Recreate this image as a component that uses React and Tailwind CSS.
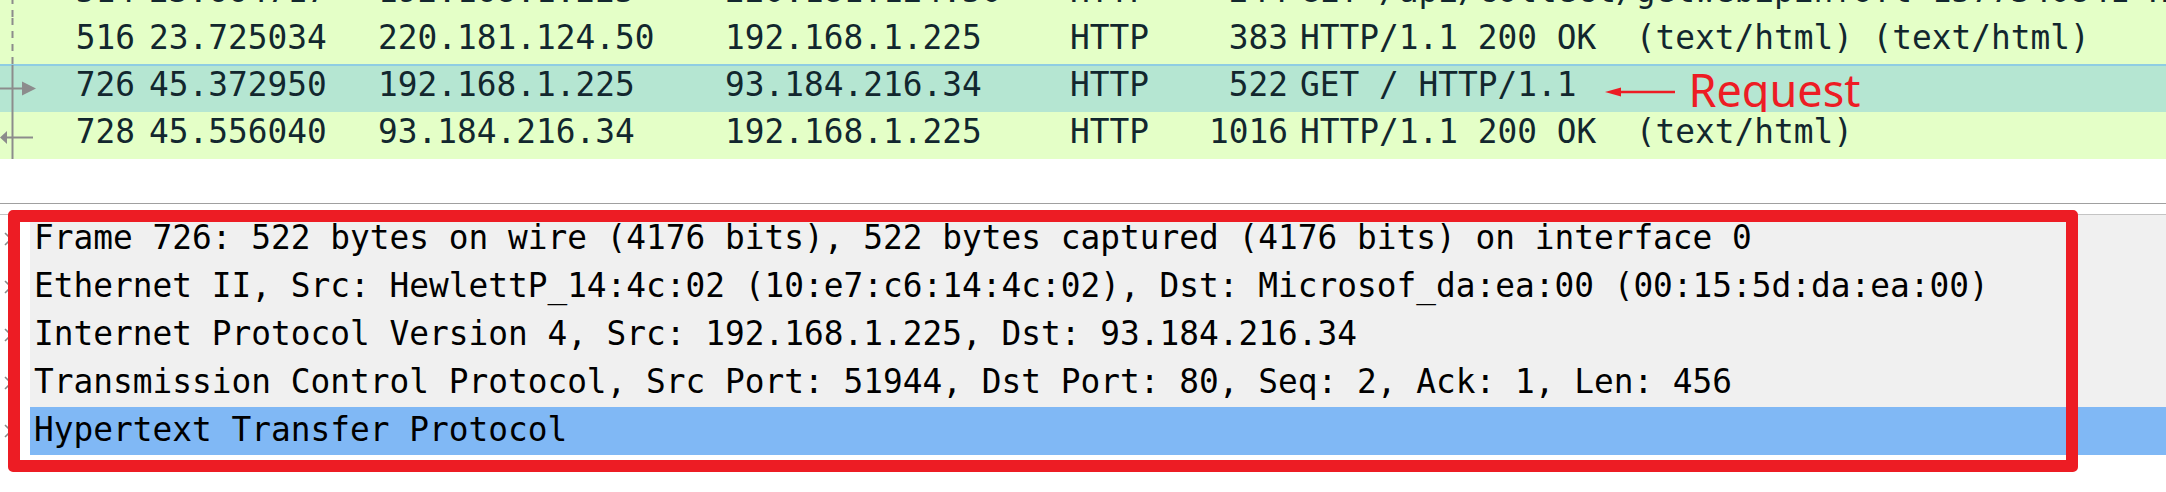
import React from 'react'

const packets = [
  {
    no: '514',
    time: '23.664717',
    src: '192.168.1.225',
    dst: '220.181.124.50',
    proto: 'HTTP',
    len: '244',
    info: 'GET /api/collect/getwebipinfo?t=1577340841 HTTP/1.1',
    mark: 'dashed',
    h: 'h-[47px] pt-[1px]',
  },
  {
    no: '516',
    time: '23.725034',
    src: '220.181.124.50',
    dst: '192.168.1.225',
    proto: 'HTTP',
    len: '383',
    info: 'HTTP/1.1 200 OK  (text/html) (text/html)',
    mark: 'dashed',
    h: 'h-[46px] pt-[1px]',
  },
  {
    no: '726',
    time: '45.372950',
    src: '192.168.1.225',
    dst: '93.184.216.34',
    proto: 'HTTP',
    len: '522',
    info: 'GET / HTTP/1.1',
    mark: 'request',
    selected: true,
    h: 'h-[48px]',
  },
  {
    no: '728',
    time: '45.556040',
    src: '93.184.216.34',
    dst: '192.168.1.225',
    proto: 'HTTP',
    len: '1016',
    info: 'HTTP/1.1 200 OK  (text/html)',
    mark: 'response',
    h: 'h-[47px] pt-[1px]',
  },
]

const details = [
  'Frame 726: 522 bytes on wire (4176 bits), 522 bytes captured (4176 bits) on interface 0',
  'Ethernet II, Src: HewlettP_14:4c:02 (10:e7:c6:14:4c:02), Dst: Microsof_da:ea:00 (00:15:5d:da:ea:00)',
  'Internet Protocol Version 4, Src: 192.168.1.225, Dst: 93.184.216.34',
  'Transmission Control Protocol, Src Port: 51944, Dst Port: 80, Seq: 2, Ack: 1, Len: 456',
  'Hypertext Transfer Protocol',
]

function RelatedMark({ type }) {
  const c = '#8c8c8c'
  return (
    <svg width="40" height="47" className="shrink-0 -mt-[1px]">
      {type === 'dashed' && (
        <line x1="12.5" y1="0" x2="12.5" y2="47" stroke={c} strokeWidth="2" strokeDasharray="7 6" />
      )}
      {type === 'request' && (
        <g>
          <line x1="12.5" y1="0" x2="12.5" y2="47" stroke={c} strokeWidth="2" />
          <line x1="0" y1="23.5" x2="23" y2="23.5" stroke={c} strokeWidth="2" />
          <polygon points="22,16.5 36,23.5 22,30.5" fill={c} />
        </g>
      )}
      {type === 'response' && (
        <g>
          <line x1="12.5" y1="0" x2="12.5" y2="47" stroke={c} strokeWidth="2" />
          <line x1="6" y1="25.5" x2="33" y2="25.5" stroke={c} strokeWidth="2" />
          <polygon points="0,25.5 7,19 7,32" fill={c} />
        </g>
      )}
    </svg>
  )
}

function PacketRow({ p }) {
  return (
    <div
      className={`flex whitespace-pre leading-[38px] ${p.h} ${
        p.selected ? 'bg-[#b5e6d2] border-t-2 border-[#8fcde3]' : 'bg-[#e4ffc7]'
      }`}
    >
      <div className="flex w-[141px] shrink-0">
        <RelatedMark type={p.mark} />
        <span className="flex-1 text-right pr-[6px]">{p.no}</span>
      </div>
      <span className="w-[229px] shrink-0 pl-[8px]">{p.time}</span>
      <span className="w-[347px] shrink-0 pl-[8px]">{p.src}</span>
      <span className="w-[345px] shrink-0 pl-[8px]">{p.dst}</span>
      <span className="w-[140px] shrink-0 pl-[8px]">{p.proto}</span>
      <span className="w-[92px] shrink-0 text-right pr-[6px]">{p.len}</span>
      <div className="flex flex-1 items-start pl-[6px] overflow-hidden">
        <span>{p.info}</span>
        {p.selected && (
          <>
            <svg width="70" height="12" className="ml-[29px] mt-[20px] shrink-0">
              <line x1="14" y1="6" x2="70" y2="6" stroke="#ed1c24" strokeWidth="2.5" />
              <polygon points="0,6 16,1.5 16,10.5" fill="#ed1c24" />
            </svg>
            <span className="ml-[13px] font-['Noto_Sans',sans-serif] text-[45px] leading-[47px] text-[#ed1c24]">
              Request
            </span>
          </>
        )}
      </div>
    </div>
  )
}

function DetailRow({ text, selected }) {
  return (
    <div className="flex h-[48px]">
      <div className="w-[30px] shrink-0 bg-white">
        <svg width="30" height="48">
          <polyline points="5,18 11,24 5,30" fill="none" stroke="#8a8a8a" strokeWidth="1.6" />
        </svg>
      </div>
      <div
        className={`flex-1 pl-[4px] pt-[4px] leading-[38px] whitespace-pre text-black ${
          selected ? 'bg-[#80b8f5]' : 'bg-[#f0f0f0]'
        }`}
      >
        {text}
      </div>
    </div>
  )
}

export default function App() {
  return (
    <div className="relative w-[2166px] h-[492px] overflow-hidden bg-white font-['DejaVu_Sans_Mono',monospace] text-[32.8px] text-[#12272e]">
      {/* packet list */}
      <div className="h-[159px] overflow-hidden">
        <div className="-mt-[29px]">
          {packets.map((p) => (
            <PacketRow key={p.no} p={p} />
          ))}
        </div>
      </div>
      <div className="h-[44px]" />
      <div className="h-px bg-[#a0a0a0]" />
      <div className="h-[10px]" />
      <div className="h-px bg-[#c4c4c4]" />

      {/* packet details */}
      <div>
        {details.map((d, i) => (
          <DetailRow key={i} text={d} selected={i === details.length - 1} />
        ))}
      </div>

      {/* annotation box */}
      <div className="absolute left-[8px] top-[210px] w-[2070px] h-[262px] border-[12px] border-[#ed1c24] rounded-[5px] pointer-events-none" />
    </div>
  )
}
